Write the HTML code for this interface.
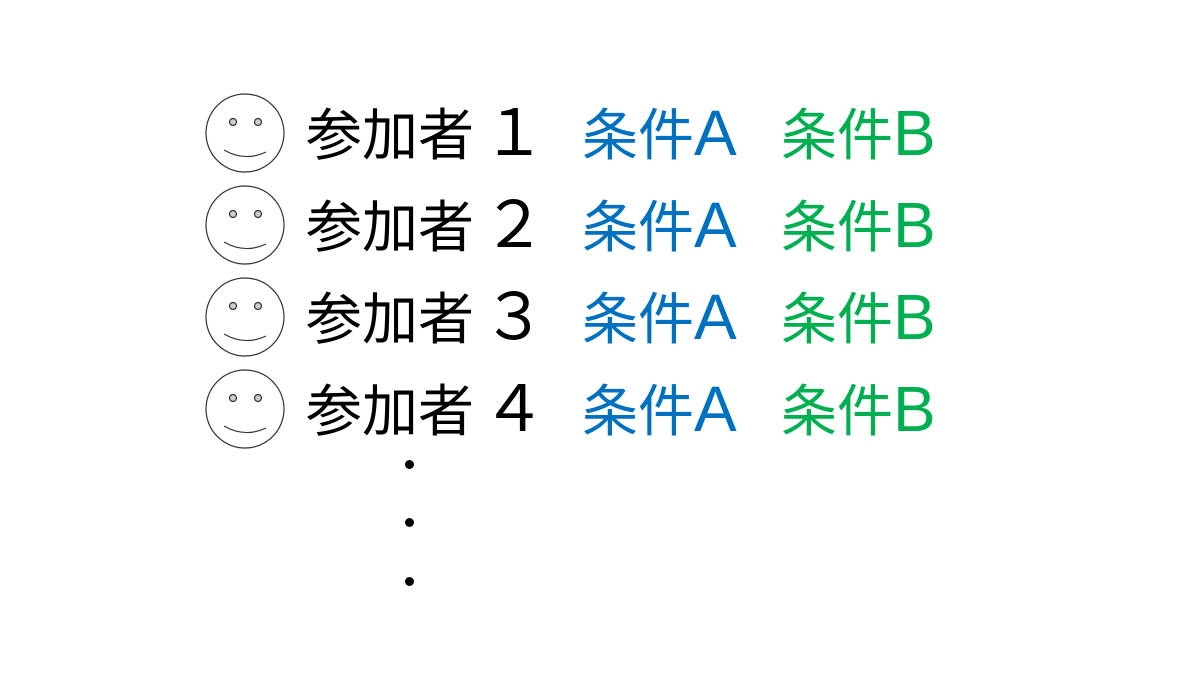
<!DOCTYPE html>
<html><head><meta charset="utf-8"><style>
body{margin:0;width:1200px;height:675px;background:#fff;position:relative;overflow:hidden;font-family:"Liberation Sans","Noto Sans CJK JP",sans-serif}
.t{position:absolute;font-size:56px;line-height:56px;white-space:nowrap;font-family:"Noto Sans CJK JP","Liberation Sans",sans-serif}
.t span{font-family:"Liberation Sans",sans-serif;font-size:64px;line-height:56px}
.a{color:#0070C0}.b{color:#00B050}
.d{position:absolute;width:9px;height:9px;border-radius:50%;background:#000;left:405px}
</style></head><body>
<svg width="1200" height="675" style="position:absolute;left:0;top:0">
<g id="s" fill="none" stroke="#333" stroke-width="1.2">
<circle cx="245" cy="133" r="39"/>
<circle cx="233" cy="122" r="3.5" fill="#ccc"/>
<circle cx="258" cy="122" r="3.5" fill="#ccc"/>
<path d="M224 150 Q245 162 266 152"/>
</g>
<use href="#s" y="92"/><use href="#s" y="184"/><use href="#s" y="276"/>
</svg>
<div class="t" style="left:306px;top:104px">参加者<span style="margin-left:8px">１</span></div>
<div class="t a" style="left:582px;top:104px">条件<span>A</span></div>
<div class="t b" style="left:781px;top:104px">条件<span>B</span></div>
<div class="t" style="left:306px;top:196px">参加者<span style="margin-left:8px">２</span></div>
<div class="t a" style="left:582px;top:196px">条件<span>A</span></div>
<div class="t b" style="left:781px;top:196px">条件<span>B</span></div>
<div class="t" style="left:306px;top:288px">参加者<span style="margin-left:8px">３</span></div>
<div class="t a" style="left:582px;top:288px">条件<span>A</span></div>
<div class="t b" style="left:781px;top:288px">条件<span>B</span></div>
<div class="t" style="left:306px;top:380px">参加者<span style="margin-left:8px">４</span></div>
<div class="t a" style="left:582px;top:380px">条件<span>A</span></div>
<div class="t b" style="left:781px;top:380px">条件<span>B</span></div>
<div class="d" style="top:460px"></div>
<div class="d" style="top:518px"></div>
<div class="d" style="top:577px"></div>
</body></html>
